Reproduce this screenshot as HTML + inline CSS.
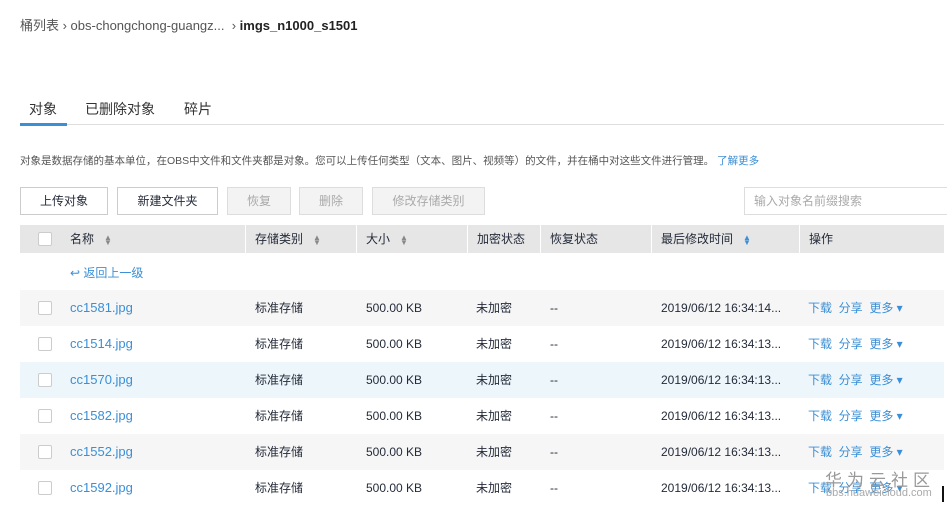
<!DOCTYPE html>
<html><head><meta charset="utf-8"><style>
*{margin:0;padding:0;box-sizing:border-box}
body{width:947px;height:509px;overflow:hidden;background:#fff;font-family:"Liberation Sans","Noto Sans CJK SC",sans-serif;color:#252b3a;position:relative}
.a{position:absolute;white-space:nowrap}
.bc{top:15px;left:20px;font-size:13px;color:#555}
.bc b{color:#222}
.tab{top:99px;font-size:14px;color:#333}
.desc{top:153px;left:20px;font-size:10.5px;color:#555}
.btn{top:187px;height:28px;border:1px solid #ccc;font-size:12px;line-height:26px;text-align:center;background:#fff;color:#252b3a}
.dis{background:#f3f3f3;color:#aaa;border-color:#ddd}
.hd{top:225px;height:28px;background:#e6e6e6;font-size:12px;line-height:28px;padding-left:9px}
.row{left:20px;width:924px;height:36px}
.cb{position:absolute;left:18px;top:11px;width:14px;height:14px;border:1px solid #ccc;background:#fff;border-radius:2px}
.c{position:absolute;top:0;line-height:36px;font-size:12px;color:#252b3a}
.lk{color:#3b8fd6}
.sort{display:inline-block;margin-left:10px;color:#888;font-size:8px;line-height:5px;vertical-align:middle}
</style></head><body>
<div class="a bc">桶列表 › obs-chongchong-guangz... &nbsp;› <b>imgs_n1000_s1501</b></div>
<div class="a tab" style="left:29px">对象</div>
<div class="a tab" style="left:85px">已删除对象</div>
<div class="a tab" style="left:184px">碎片</div>
<div class="a" style="top:124px;left:20px;width:924px;height:1px;background:#ddd"></div>
<div class="a" style="top:123px;left:20px;width:47px;height:3px;background:#3b8fd6"></div>
<div class="a desc">对象是数据存储的基本单位，在OBS中文件和文件夹都是对象。您可以上传任何类型（文本、图片、视频等）的文件，并在桶中对这些文件进行管理。 <span class="lk">了解更多</span></div>
<div class="a btn" style="left:20px;width:88px">上传对象</div>
<div class="a btn" style="left:117px;width:101px">新建文件夹</div>
<div class="a btn dis" style="left:227px;width:64px">恢复</div>
<div class="a btn dis" style="left:299px;width:64px">删除</div>
<div class="a btn dis" style="left:372px;width:113px">修改存储类别</div>
<div class="a btn" style="left:744px;width:210px;text-align:left;padding-left:9px;color:#aaa;border-color:#ddd">输入对象名前缀搜索</div>
<div class="a hd" style="left:20px;width:225px"><span class="cb" style="left:18px;top:7px"></span><span style="margin-left:41px">名称</span><span class="sort">▲<br>▼</span></div>
<div class="a hd" style="left:246px;width:110px">存储类别<span class="sort">▲<br>▼</span></div>
<div class="a hd" style="left:357px;width:110px">大小<span class="sort">▲<br>▼</span></div>
<div class="a hd" style="left:468px;width:72px">加密状态</div>
<div class="a hd" style="left:541px;width:110px">恢复状态</div>
<div class="a hd" style="left:652px;width:147px">最后修改时间<span class="sort" style="color:#3b8fd6">▲<br>▼</span></div>
<div class="a hd" style="left:800px;width:144px">操作</div>
<div class="a lk" style="top:264px;left:70px;font-size:12px">↩ 返回上一级</div>
<div class="a row" style="top:290px;background:#f6f6f6"><span class="cb"></span><span class="c lk" style="left:50px;font-size:13px">cc1581.jpg</span><span class="c" style="left:235px">标准存储</span><span class="c" style="left:346px">500.00 KB</span><span class="c" style="left:456px">未加密</span><span class="c" style="left:530px">--</span><span class="c" style="left:641px">2019/06/12 16:34:14...</span><span class="c lk" style="left:788px">下载 &nbsp;分享 &nbsp;更多 ▾</span></div>
<div class="a row" style="top:326px"><span class="cb"></span><span class="c lk" style="left:50px;font-size:13px">cc1514.jpg</span><span class="c" style="left:235px">标准存储</span><span class="c" style="left:346px">500.00 KB</span><span class="c" style="left:456px">未加密</span><span class="c" style="left:530px">--</span><span class="c" style="left:641px">2019/06/12 16:34:13...</span><span class="c lk" style="left:788px">下载 &nbsp;分享 &nbsp;更多 ▾</span></div>
<div class="a row" style="top:362px;background:#edf6fb"><span class="cb"></span><span class="c lk" style="left:50px;font-size:13px">cc1570.jpg</span><span class="c" style="left:235px">标准存储</span><span class="c" style="left:346px">500.00 KB</span><span class="c" style="left:456px">未加密</span><span class="c" style="left:530px">--</span><span class="c" style="left:641px">2019/06/12 16:34:13...</span><span class="c lk" style="left:788px">下载 &nbsp;分享 &nbsp;更多 ▾</span></div>
<div class="a row" style="top:398px"><span class="cb"></span><span class="c lk" style="left:50px;font-size:13px">cc1582.jpg</span><span class="c" style="left:235px">标准存储</span><span class="c" style="left:346px">500.00 KB</span><span class="c" style="left:456px">未加密</span><span class="c" style="left:530px">--</span><span class="c" style="left:641px">2019/06/12 16:34:13...</span><span class="c lk" style="left:788px">下载 &nbsp;分享 &nbsp;更多 ▾</span></div>
<div class="a row" style="top:434px;background:#f6f6f6"><span class="cb"></span><span class="c lk" style="left:50px;font-size:13px">cc1552.jpg</span><span class="c" style="left:235px">标准存储</span><span class="c" style="left:346px">500.00 KB</span><span class="c" style="left:456px">未加密</span><span class="c" style="left:530px">--</span><span class="c" style="left:641px">2019/06/12 16:34:13...</span><span class="c lk" style="left:788px">下载 &nbsp;分享 &nbsp;更多 ▾</span></div>
<div class="a row" style="top:470px"><span class="cb"></span><span class="c lk" style="left:50px;font-size:13px">cc1592.jpg</span><span class="c" style="left:235px">标准存储</span><span class="c" style="left:346px">500.00 KB</span><span class="c" style="left:456px">未加密</span><span class="c" style="left:530px">--</span><span class="c" style="left:641px">2019/06/12 16:34:13...</span><span class="c lk" style="left:788px">下载 &nbsp;分享 &nbsp;更多 ▾</span></div>
<div class="a" style="top:466px;left:825px;font-size:17px;color:#999;letter-spacing:5px">华为云社区</div>
<div class="a" style="top:487px;left:826px;font-size:11px;color:#aaa">bbs.huaweicloud.com</div>
<div class="a" style="top:486px;left:942px;width:2px;height:16px;background:#111"></div>
</body></html>
